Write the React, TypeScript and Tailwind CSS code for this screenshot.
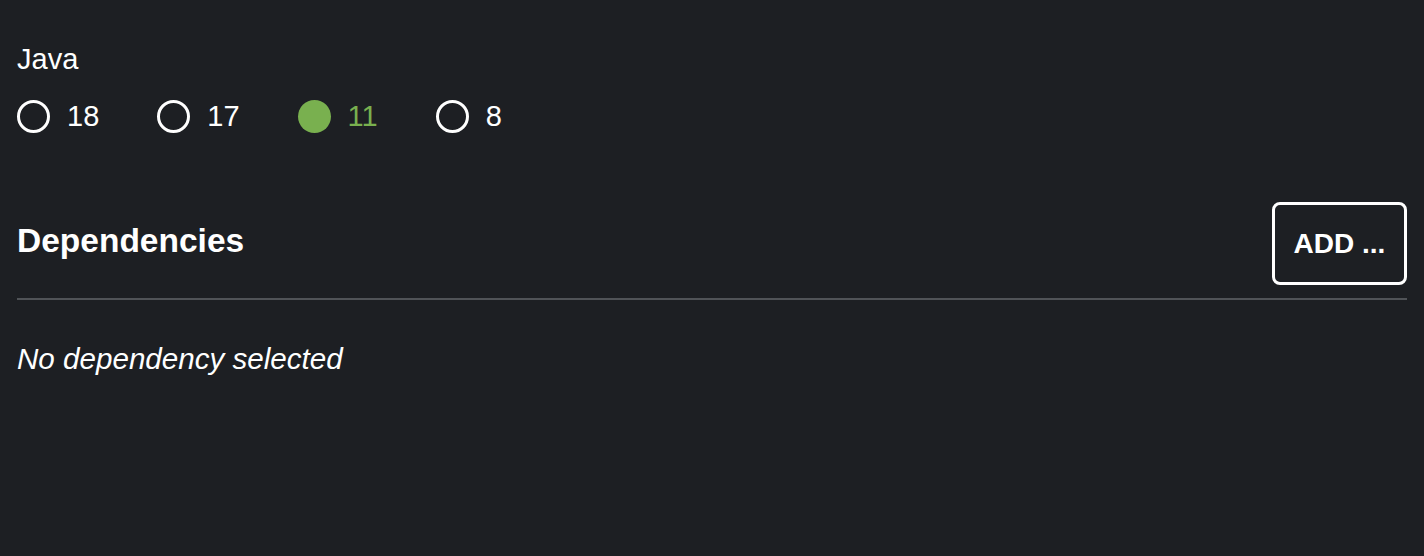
import React, { useState } from "react";

const versions = ["18", "17", "11", "8"];

function Radio({
  label,
  checked,
  onSelect,
}: {
  label: string;
  checked: boolean;
  onSelect: () => void;
}) {
  return (
    <label
      onClick={onSelect}
      className="flex items-center cursor-pointer mr-[58px]"
    >
      {checked ? (
        <span className="block w-[33px] h-[33px] rounded-full bg-[#79b04f]" />
      ) : (
        <span className="block w-[33px] h-[33px] rounded-full border-[3px] border-white" />
      )}
      <span
        className={`ml-[17px] text-[29px] leading-[29px] ${
          checked ? "text-[#79b04f]" : "text-white"
        }`}
      >
        {label}
      </span>
    </label>
  );
}

export default function App() {
  const [java, setJava] = useState("11");

  return (
    <div className="min-h-screen bg-[#1d1f23] text-white px-[17px] pt-[45px] font-['Liberation_Sans',Arial,sans-serif]">
      <div className="text-[29px] leading-[29px]">Java</div>
      <div className="flex items-center mt-[26px] h-[32px]">
        {versions.map((v) => (
          <Radio
            key={v}
            label={v}
            checked={java === v}
            onSelect={() => setJava(v)}
          />
        ))}
      </div>

      <div className="flex items-center justify-between mt-[70px]">
        <h2 className="text-[33.5px] leading-[34px] font-bold mb-[5px]">
          Dependencies
        </h2>
        <button className="w-[135px] h-[83px] border-[3px] border-white rounded-[8px] text-[28px] font-bold leading-none flex items-center justify-center">
          ADD ...
        </button>
      </div>
      <div className="h-[2px] bg-[#505357] mt-[13px]" />

      <div className="mt-[44px] text-[29.6px] leading-[30px] italic">
        No dependency selected
      </div>
    </div>
  );
}
